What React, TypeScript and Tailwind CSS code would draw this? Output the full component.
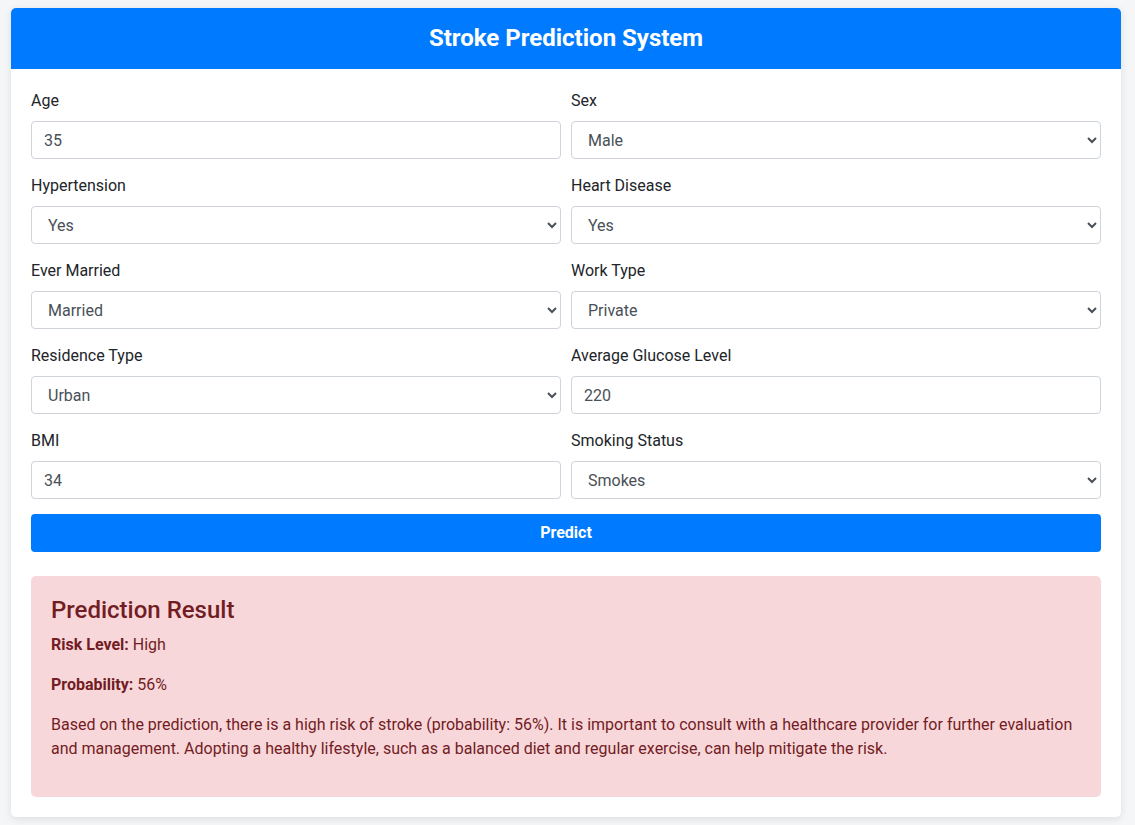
import React from "react";

const font = { fontFamily: "Roboto, 'Liberation Sans', sans-serif" };

type Field =
    | { label: string; kind: "input"; value: string }
    | { label: string; kind: "select"; value: string; options: string[] };

const fields: Field[] = [
    { label: "Age", kind: "input", value: "35" },
    { label: "Sex", kind: "select", value: "Male", options: ["Male", "Female"] },
    { label: "Hypertension", kind: "select", value: "Yes", options: ["Yes", "No"] },
    { label: "Heart Disease", kind: "select", value: "Yes", options: ["Yes", "No"] },
    { label: "Ever Married", kind: "select", value: "Married", options: ["Married", "Not Married"] },
    { label: "Work Type", kind: "select", value: "Private", options: ["Private", "Self-employed", "Govt job", "Children", "Never worked"] },
    { label: "Residence Type", kind: "select", value: "Urban", options: ["Urban", "Rural"] },
    { label: "Average Glucose Level", kind: "input", value: "220" },
    { label: "BMI", kind: "input", value: "34" },
    { label: "Smoking Status", kind: "select", value: "Smokes", options: ["Smokes", "Formerly smoked", "Never smoked", "Unknown"] },
];

const controlClass =
    "block w-full h-[38px] px-3 text-base text-[#495057] bg-white border border-[#ced4da] rounded-[4px] outline-none";

export default function App() {
    return (
        <div className="min-h-screen bg-[#f5f6f8] pt-2 pb-2" style={font}>
            <div className="ml-[11px] w-[1110px] bg-white rounded-[5px] overflow-hidden shadow-[0_2px_8px_rgba(0,0,0,0.1)]">
                <div className="h-[61px] pb-[2px] bg-[#007bff] flex items-center justify-center">
                    <h1 className="text-white text-2xl font-bold">Stroke Prediction System</h1>
                </div>

                <div className="p-5">
                    <div className="grid grid-cols-2 gap-x-[10px]">
                        {fields.map((f) => (
                            <div key={f.label} className="mb-[15px]">
                                <label className="block mb-2 text-base leading-6 text-[#212529]">{f.label}</label>
                                {f.kind === "input" ? (
                                    <input type="text" defaultValue={f.value} className={controlClass} />
                                ) : (
                                    <select defaultValue={f.value} className={controlClass}>
                                        {f.options.map((o) => (
                                            <option key={o}>{o}</option>
                                        ))}
                                    </select>
                                )}
                            </div>
                        ))}
                    </div>

                    <button className="w-full h-[38px] bg-[#007bff] text-white font-bold text-base rounded-[4px]">
                        Predict
                    </button>

                    <div className="mt-6 bg-[#f8d7da] text-[#721c24] rounded-[5px] p-5">
                        <h3 className="text-2xl font-medium leading-[1.2] mb-2">Prediction Result</h3>
                        <p className="mb-4 leading-6">
                            <strong className="font-bold">Risk Level:</strong> High
                        </p>
                        <p className="mb-4 leading-6">
                            <strong className="font-bold">Probability:</strong> 56%
                        </p>
                        <p className="mb-4 leading-6">
                            Based on the prediction, there is a high risk of stroke (probability: 56%). It is important to consult with a healthcare provider for further evaluation and management. Adopting a healthy lifestyle, such as a balanced diet and regular exercise, can help mitigate the risk.
                        </p>
                    </div>
                </div>
            </div>
        </div>
    );
}
